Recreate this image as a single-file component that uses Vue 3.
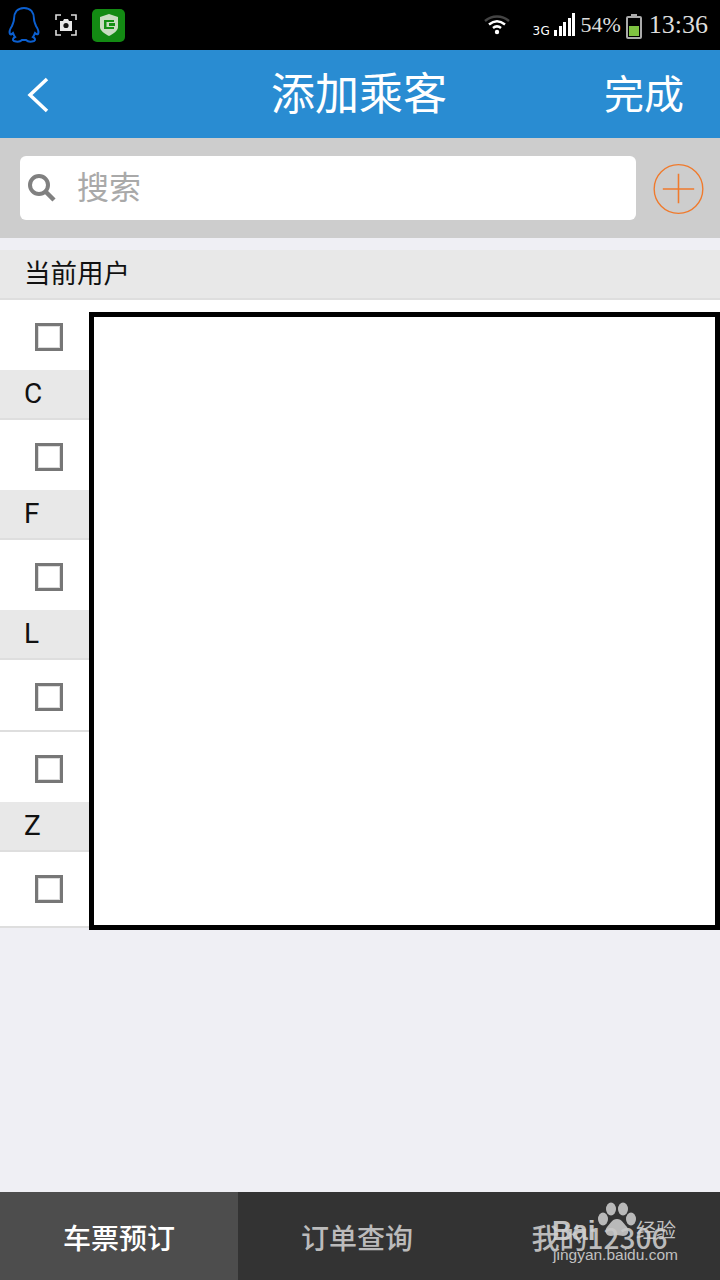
<template>
  <div class="page">
    <div class="status-bar">
      <div class="status-left">
        <svg class="qq" width="34" height="38" viewBox="0 0 34 38" fill="none" stroke="#0b5fd0" stroke-width="2">
          <path d="M17 2C10 2 7 7 7 13c0 3-1 4-2 7-2 3-3 6-2 8 1 1 2 0 3-1 1 2 1 3 2 4-2 1-3 3-1 4 3 1 6 1 8-1h4c2 2 5 2 8 1 2-1 1-3-1-4 1-1 1-2 2-4 1 1 2 2 3 1 1-2 0-5-2-8-1-3-2-4-2-7 0-6-3-11-10-11z" />
        </svg>
        <svg class="shot" width="22" height="22" viewBox="0 0 22 22" fill="none">
          <path d="M1 6V1h5M16 1h5v5M21 16v5h-5M6 21H1v-5" stroke="#ddd" stroke-width="1.6" />
          <path d="M5 7h3l1-2h4l1 2h3v10H5z" fill="#e8e8e8" />
          <circle cx="11" cy="11.5" r="2.6" fill="#111" />
        </svg>
        <div class="guard">
          <svg width="20" height="24" viewBox="0 0 20 24">
            <path d="M10 1l9 3v10c0 4-5 7-9 9-4-2-9-5-9-9V4z" fill="#c9dcc2" />
            <path d="M5 7h10v2H7.500v5H15v2H5z" fill="#159015" />
            <rect x="10" y="10" width="6" height="3" fill="#159015" />
          </svg>
        </div>
      </div>
      <div class="status-right">
        <svg class="wifi" width="26" height="20" viewBox="0 0 26 20" fill="none">
          <path d="M1 6c7-6 17-6 24 0" stroke="#444" stroke-width="2.500" />
          <path d="M5 9.500c5-4 11-4 16 0" stroke="#fff" stroke-width="2.500" />
          <path d="M9 13c2.500-2 5.500-2 8 0" stroke="#fff" stroke-width="2.500" />
          <circle cx="13" cy="17" r="2.200" fill="#fff" />
        </svg>
        <span class="net">3G</span>
        <div class="signal">
          <i v-for="h in bars" :key="h" :style="{ height: h + 'px' }" />
        </div>
        <span class="pct">54%</span>
        <div class="battery"><div class="battery-fill" /></div>
        <span class="time">13:36</span>
      </div>
    </div>

    <header class="title-bar">
      <svg class="back" width="24" height="36" viewBox="0 0 24 36" fill="none">
        <path d="M21 2L4 18l17 16" stroke="#fff" stroke-width="3.500" />
      </svg>
      <h1>添加乘客</h1>
      <span class="done">完成</span>
    </header>

    <div class="search-band">
      <div class="search-box">
        <svg width="30" height="30" viewBox="0 0 30 30" fill="none">
          <circle cx="12" cy="12" r="9" stroke="#808080" stroke-width="4" />
          <path d="M18.500 18.500L27 27" stroke="#808080" stroke-width="4.500" />
        </svg>
        <span>搜索</span>
      </div>
      <svg class="add" width="52" height="52" viewBox="0 0 52 52" fill="none" stroke="#f07a2c">
        <circle cx="26" cy="26" r="24.800" stroke-width="1.400" />
        <path d="M10 26h32M26 10.500v30" stroke-width="1.600" />
      </svg>
    </div>

    <div class="list">
      <template v-for="item in rows" :key="item.id">
        <div v-if="item.label" class="section" :class="{ latin: item.latin }">
          <span>{{ item.label }}</span>
        </div>
        <div v-else class="row" :class="{ joined: item.joined, last: item.last }"><div class="check" /></div>
      </template>
      <div class="redact" />
    </div>

    <nav class="tabs">
      <div class="tab active">车票预订</div>
      <div class="tab">订单查询</div>
      <div class="tab mine">我的12306</div>
      <div class="mark">
        <svg width="46" height="44" viewBox="0 0 46 44" fill="#c8c8c8">
          <ellipse cx="9" cy="17" rx="5" ry="6.500" />
          <ellipse cx="17" cy="7" rx="5" ry="6.500" />
          <ellipse cx="29" cy="7" rx="5" ry="6.500" />
          <ellipse cx="37" cy="17" rx="5" ry="6.500" />
          <path d="M23 17c5 0 7 5 10 8 3 4 1 9-4 9-2 0-4-1-6-1s-4 1-6 1c-5 0-7-5-4-9 3-3 5-8 10-8z" />
        </svg>
        <span class="mark-word">Bai</span>
        <span class="mark-jy">经验</span>
        <span class="mark-url">jingyan.baidu.com</span>
      </div>
    </nav>
  </div>
</template>

<script setup>
const bars = [6, 10, 14, 18, 23]

const rows = [
  { id: 'current', label: '当前用户' },
  { id: 'r1' },
  { id: 'c', label: 'C', latin: true },
  { id: 'r2' },
  { id: 'f', label: 'F', latin: true },
  { id: 'r3' },
  { id: 'l', label: 'L', latin: true },
  { id: 'r4', joined: true },
  { id: 'r5' },
  { id: 'z', label: 'Z', latin: true },
  { id: 'r6', joined: true, last: true }
]
</script>

<style>
html,
body {
  margin: 0;
  background: #efeff4;
}
</style>

<style scoped>
.page {
  position: relative;
  display: flex;
  flex-direction: column;
  width: 720px;
  height: 1280px;
  overflow: hidden;
  background: #efeff4;
  font-family: 'Noto Sans CJK SC', 'Noto Sans', sans-serif;
}

.status-bar {
  display: flex;
  justify-content: space-between;
  align-items: center;
  height: 50px;
  flex: none;
  background: #000;
}

.status-left {
  display: flex;
  align-items: center;
  padding-left: 7px;
}

.shot {
  margin-left: 14px;
}

.guard {
  display: flex;
  align-items: center;
  justify-content: center;
  width: 33px;
  height: 33px;
  margin-left: 15px;
  border-radius: 5px;
  background: #138a13;
}

.status-right {
  display: flex;
  align-items: center;
  padding-right: 12px;
  color: #ddd;
  font-family: 'Liberation Serif', serif;
}

.wifi {
  margin-right: 22px;
}

.net {
  width: 18px;
  margin: 11px 4px 0 0;
  color: #fff;
  font: 12px/1 'DejaVu Sans', sans-serif;
  letter-spacing: 0.5px;
}

.signal {
  display: flex;
  align-items: flex-end;
  gap: 1.500px;
  height: 23px;
  margin-top: -2px;
}

.signal i {
  width: 3px;
  background: #fff;
}

.pct {
  margin-left: 5px;
  font-size: 22px;
}

.battery {
  position: relative;
  box-sizing: border-box;
  width: 16px;
  height: 23px;
  margin: 4px 7px 0 5px;
  border: 2px solid #aaa;
  border-radius: 2px;
}

.battery::before {
  content: '';
  position: absolute;
  top: -4px;
  left: 3px;
  width: 6px;
  height: 2px;
  background: #aaa;
}

.battery-fill {
  position: absolute;
  left: 1px;
  right: 1px;
  bottom: 1px;
  height: 10px;
  background: #7fc241;
}

.time {
  font-size: 26px;
}

.title-bar {
  display: flex;
  align-items: center;
  justify-content: center;
  position: relative;
  flex: none;
  height: 88px;
  background: #298cd2;
  color: #fff;
}

.title-bar h1 {
  margin: 0 2px 7px 0;
  font-size: 44px;
  font-weight: 400;
  line-height: 1;
}

.back {
  position: absolute;
  left: 26px;
  top: 27px;
}

.done {
  position: absolute;
  left: 604px;
  top: 19px;
  font-size: 40px;
  line-height: 46px;
}

.search-band {
  display: flex;
  align-items: center;
  flex: none;
  height: 100px;
  box-sizing: border-box;
  padding: 0 16px 0 20px;
  background: #cdcdcd;
}

.search-box {
  display: flex;
  flex: none;
  align-items: center;
  gap: 20px;
  width: 616px;
  height: 64px;
  box-sizing: border-box;
  padding-left: 7px;
  border-radius: 6px;
  background: #fff;
  color: #a9a9a9;
  font-size: 32px;
}

.search-box span {
  margin-bottom: 6px;
}

.add {
  margin: 2px 0 0 17px;
}

.list {
  position: relative;
  flex: none;
  padding-top: 12px;
}

.section {
  box-sizing: border-box;
  height: 50px;
  padding-left: 24px;
  border-bottom: 2px solid #dedede;
  background: #e8e8e8;
  color: #111;
  font-size: 26.500px;
  line-height: 44px;
}

.section.latin {
  font-family: Roboto, sans-serif;
  font-size: 28px;
  line-height: 47px;
}

.row {
  display: flex;
  align-items: center;
  box-sizing: border-box;
  height: 70px;
  padding: 4px 0 0 35px;
  background: #fff;
}

.row.joined {
  height: 72px;
  border-bottom: 2px solid #dedede;
}

.row.last {
  height: 76px;
  padding-bottom: 4px;
}

.check {
  box-sizing: border-box;
  width: 28px;
  height: 28px;
  border: 3px solid #777;
  outline: 1px solid #ddd;
  outline-offset: -4px;
}

.redact {
  position: absolute;
  left: 89px;
  right: 0;
  top: 74px;
  height: 618px;
  box-sizing: border-box;
  border: 5px solid #000;
  background: #fff;
}

.tabs {
  position: absolute;
  left: 0;
  right: 0;
  bottom: 0;
  display: flex;
  height: 88px;
  background: #333;
}

.tab {
  display: flex;
  align-items: center;
  justify-content: center;
  width: 238px;
  padding-top: 2px;
  box-sizing: border-box;
  color: #bbb;
  font-size: 28px;
  font-weight: 500;
}

.tab.mine {
  width: 244px;
  padding-left: 3px;
}

.tab.active {
  background: #4d4d4d;
  color: #fff;
}

.mark {
  position: absolute;
  left: 551px;
  top: 10px;
  width: 130px;
  height: 74px;
  color: #d0d0d0;
  font-family: 'Liberation Sans', sans-serif;
  opacity: 0.9;
}

.mark svg {
  position: absolute;
  left: 43px;
  top: 0;
}

.mark-word {
  position: absolute;
  left: 1px;
  top: 13px;
  font-size: 28px;
  font-weight: 700;
}

.mark-jy {
  position: absolute;
  left: 85px;
  top: 16px;
  font: 20px/1.2 'Noto Sans CJK SC', sans-serif;
  white-space: nowrap;
}

.mark-url {
  position: absolute;
  left: 2px;
  top: 44px;
  font-size: 15.500px;
  white-space: nowrap;
}
</style>
